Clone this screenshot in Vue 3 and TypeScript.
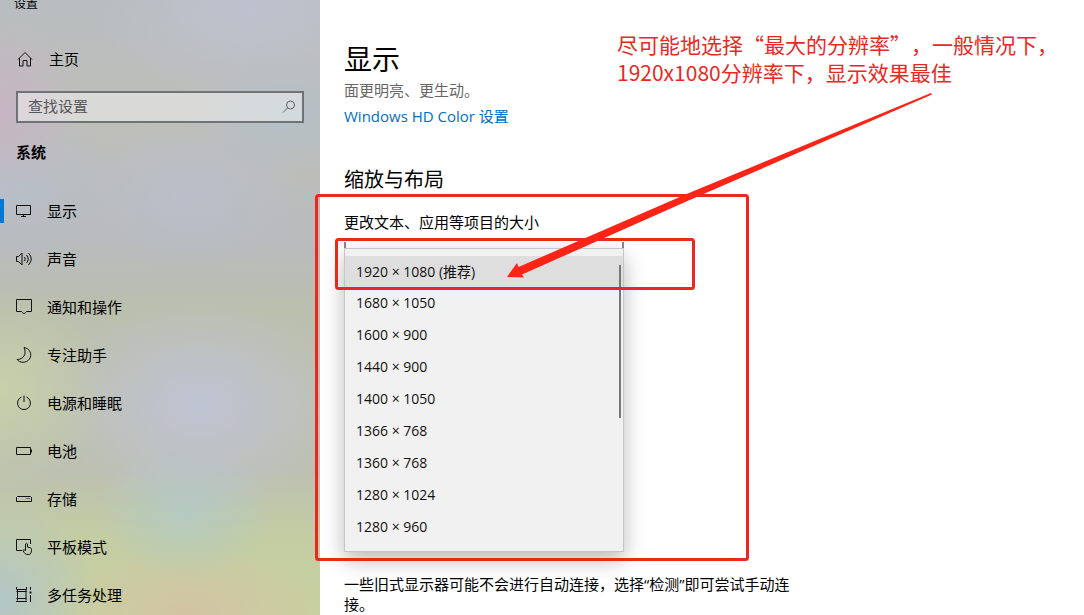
<script setup lang="ts">
import { ref } from 'vue'

interface NavItem {
  id: string
  label: string
}

const navItems: NavItem[] = [
  { id: 'display', label: '显示' },
  { id: 'sound', label: '声音' },
  { id: 'notify', label: '通知和操作' },
  { id: 'focus', label: '专注助手' },
  { id: 'power', label: '电源和睡眠' },
  { id: 'battery', label: '电池' },
  { id: 'storage', label: '存储' },
  { id: 'tablet', label: '平板模式' },
  { id: 'multitask', label: '多任务处理' },
]

const resolutions: string[] = [
  '1920 × 1080 (推荐)',
  '1680 × 1050',
  '1600 × 900',
  '1440 × 900',
  '1400 × 1050',
  '1366 × 768',
  '1360 × 768',
  '1280 × 1024',
  '1280 × 960',
]

const active = ref('display')
const resolution = ref(resolutions[0])
const query = ref('')
</script>

<template>
  <div class="window">
    <aside class="sidebar">
      <div class="title"><span>设置</span></div>
      <a class="home" href="#home">
        <svg class="icon" viewBox="0 0 18 18" aria-hidden="true">
          <path d="M2 9.5 9 2.500 16 9.500M3.500 8v8h3.500v-5.500h4V16h3.500V8" />
        </svg>
        <span>主页</span>
      </a>
      <div class="search">
        <input v-model="query" type="text" placeholder="查找设置" aria-label="查找设置" />
        <button type="button" aria-label="搜索">
          <svg viewBox="0 0 14 14" aria-hidden="true">
            <circle cx="8.500" cy="5" r="4" />
            <path d="M5.500 8 1 12.500" />
          </svg>
        </button>
      </div>
      <h2 class="group">系统</h2>
      <nav>
        <a
          v-for="item in navItems"
          :key="item.id"
          :href="'#' + item.id"
          :class="['nav-item', { active: active === item.id }]"
          @click.prevent="active = item.id"
        >
          <svg class="icon" viewBox="0 0 18 18" aria-hidden="true">
            <g v-if="item.id === 'display'">
              <path d="M.5 3.500h14v9H.5zM7.500 12.500v2M5 14.500h5" />
            </g>
            <g v-else-if="item.id === 'sound'">
              <path d="M.5 6.500h2l3.500-3.500v12L2.500 11.500h-2zM8.500 7q1.500 2 0 4M10.500 5q3.500 4 0 8M12.500 3q5.500 6 0 12" />
            </g>
            <g v-else-if="item.id === 'notify'">
              <path d="M.5 1.500h15v12h-5L8 16l-2.500-2.500h-5z" />
            </g>
            <g v-else-if="item.id === 'focus'">
              <path d="M8 1.500c6 1 8.500 7 5.500 11.500-3 4.500-10 4-12.500.500C7.500 13.500 11 8 8 1.500z" />
            </g>
            <g v-else-if="item.id === 'power'">
              <path d="M8 1.500V8M5.500 3C-.5 5.500.5 15.500 8 15.500S16.500 5.500 10.500 3" />
            </g>
            <g v-else-if="item.id === 'battery'">
              <path d="M.5 5.500h14v7H.5zM15.500 7.500v3" />
            </g>
            <g v-else-if="item.id === 'storage'">
              <path d="M1.500 6.500h13l1 1v4h-15v-4zM10.500 8.500h1M12.500 8.500h1" />
            </g>
            <g v-else-if="item.id === 'tablet'">
              <path d="M6 12.500H.5v-11h14V6M9.500 12.500V6q1-1.500 2 0V9l3 .8q1 .3 1 1.700c0 4-1 5-3.500 5S8.500 15.500 7 12.500q.5-1.500 2.500 0" />
            </g>
            <g v-else>
              <path d="M.5 1v2.500h10V1M1.500 3.500v11M10 3.500v11M.5 5.500h10M.5 12.500h10M0 15.500h11M14.500 1v3M14.500 9v7" />
              <path d="M13.500 6.500h2" class="dot" />
            </g>
          </svg>
          <span>{{ item.label }}</span>
        </a>
      </nav>
    </aside>

    <main class="content">
      <h1>显示</h1>
      <p class="muted">面更明亮、更生动。</p>
      <a class="link" href="#hd-color">Windows HD Color 设置</a>

      <h2 class="section">缩放与布局</h2>
      <label class="field-label" for="resolution">更改文本、应用等项目的大小</label>
      <div class="dropdown">
        <div class="stub"></div>
        <div class="popup">
          <select id="resolution" v-model="resolution" size="9">
            <option v-for="r in resolutions" :key="r" :value="r">{{ r }}</option>
          </select>
          <span class="thumb"></span>
        </div>
      </div>
      <p class="hint">一些旧式显示器可能不会进行自动连接，选择“检测”即可尝试手动连接。</p>
    </main>

    <svg class="marks" width="1084" height="615" aria-hidden="true">
      <rect x="316.500" y="195.500" width="431" height="364" rx="2" />
      <rect x="336.500" y="239.500" width="357" height="49" rx="2" />
      <path d="M931 93 932 94.500 692 199 522 274.500 524 277.500 507 277 517 263 518.500 267 689 193z" class="arrow" />
    </svg>
    <p class="note">尽可能地选择“最大的分辨率”，一般情况下，<br />1920x1080分辨率下，显示效果最佳</p>
  </div>
</template>

<style>
body {
  margin: 0;
}
</style>

<style scoped>
.window {
  position: relative;
  display: flex;
  height: 100vh;
  overflow: hidden;
  background: #fff;
  color: #000;
  font-family: "Open Sans", "Noto Sans CJK SC", sans-serif;
  font-size: 15px;
  line-height: 24px;
}
h1,
h2,
p {
  margin: 0;
  font-weight: 400;
}
a {
  color: inherit;
  text-decoration: none;
}
.sidebar {
  flex: none;
  width: 320px;
  background:
    radial-gradient(ellipse 80px 90px at 0 110px, rgba(200, 180, 196, 0.9), rgba(200, 180, 196, 0)),
    radial-gradient(ellipse 150px 90px at 250px 10px, rgba(191, 195, 210, 0.8), rgba(191, 195, 210, 0)),
    radial-gradient(ellipse 90px 60px at 285px 115px, rgba(176, 192, 202, 0.8), rgba(176, 192, 202, 0)),
    radial-gradient(ellipse 110px 80px at 190px 195px, rgba(184, 191, 207, 0.7), rgba(184, 191, 207, 0)),
    radial-gradient(ellipse 120px 80px at 10px 185px, rgba(181, 191, 203, 0.8), rgba(181, 191, 203, 0)),
    radial-gradient(ellipse 140px 110px at 200px 405px, rgba(190, 195, 214, 0.9), rgba(190, 195, 214, 0)),
    radial-gradient(ellipse 110px 100px at 0 390px, rgba(199, 210, 168, 0.9), rgba(199, 210, 168, 0)),
    radial-gradient(ellipse 90px 70px at 185px 510px, rgba(176, 202, 200, 0.8), rgba(176, 202, 200, 0)),
    radial-gradient(ellipse 130px 70px at 190px 615px, rgba(212, 194, 164, 0.9), rgba(212, 194, 164, 0)),
    radial-gradient(ellipse 100px 100px at 0 600px, rgba(176, 196, 204, 0.9), rgba(176, 196, 204, 0)),
    linear-gradient(#b9bdbf 0, #bebeb9 130px, #b9bbbd 240px, #bbbfae 310px, #bfc1b3 400px, #bdc0b1 470px, #c4cda2 540px, #c8d0a0 100%);
}
.title {
  display: flex;
  align-items: flex-end;
  height: 12px;
  padding-left: 14px;
  font-size: 12px;
  line-height: 16px;
}
.home {
  display: flex;
  align-items: center;
  gap: 15px;
  height: 48px;
  margin-top: 23px;
  padding-left: 16px;
}
.icon {
  flex: none;
  width: 18px;
  height: 18px;
  fill: none;
  stroke: #111;
  stroke-width: 1;
}
.icon .dot {
  stroke-width: 2;
}
.search {
  display: flex;
  align-items: center;
  box-sizing: border-box;
  height: 32px;
  margin: 8px 16px 0;
  border: 2px solid #707376;
  background: rgba(255, 255, 255, 0.42);
}
.search input {
  flex: 1;
  min-width: 0;
  height: 24px;
  padding: 0 0 2px 10px;
  border: 0;
  outline: 0;
  background: transparent;
  color: #222;
  font: inherit;
}
.search input::placeholder {
  color: #55575a;
  opacity: 1;
}
.search button {
  display: flex;
  padding: 0 6px;
  border: 0;
  background: transparent;
}
.search svg {
  width: 14px;
  height: 14px;
  fill: none;
  stroke: #5d6063;
}
.group {
  margin: 17px 16px 23px;
  font-size: 15px;
  font-weight: 700;
}
.nav-item {
  display: flex;
  align-items: center;
  gap: 13px;
  height: 48px;
  padding-left: 16px;
}
.nav-item.active {
  padding-left: 0;
}
.nav-item.active::before {
  width: 4px;
  height: 24px;
  margin-right: -1px;
  background: #0078d7;
  content: "";
}
.content {
  flex: 1;
  min-width: 0;
  padding: 41px 24px 0;
}
h1 {
  font-size: 28px;
  line-height: 36px;
}
.muted {
  margin-top: 1px;
  color: #666;
}
.link {
  display: block;
  width: fit-content;
  margin-top: 2px;
  color: #0070c6;
}
.section {
  margin-top: 38px;
  font-size: 20px;
  line-height: 28px;
}
.field-label {
  display: block;
  margin-top: 16px;
}
.dropdown {
  width: 280px;
  margin-top: 8px;
}
.stub {
  height: 6px;
  border: solid #85888b;
  border-width: 0 2px;
}
.popup {
  position: relative;
  box-sizing: border-box;
  padding: 7px 0;
  border: 1px solid #c4c6c8;
  background: #f1f1f1;
  box-shadow: 0 8px 20px rgba(0, 0, 0, 0.28);
}
.popup select {
  display: block;
  width: 100%;
  height: 288px;
  padding: 0;
  overflow: hidden;
  border: 0;
  outline: 0;
  background: transparent;
  color: #111;
  font: inherit;
  font-size: 14px;
  scrollbar-width: none;
}
.popup option {
  box-sizing: border-box;
  height: 32px;
  padding: 5px 11px 0;
  color: #111;
}
.popup option:checked {
  background: #dedede linear-gradient(#dedede, #dedede);
  color: #111;
}
.thumb {
  position: absolute;
  top: 16px;
  right: 2px;
  width: 2px;
  height: 153px;
  background: #777;
}
.hint {
  max-width: 454px;
  margin-top: 22px;
  line-height: 20px;
}
.marks {
  position: absolute;
  top: 0;
  left: 0;
  fill: none;
  stroke: #e8291f;
  stroke-width: 3;
  pointer-events: none;
}
.marks .arrow {
  fill: #fb2416;
  stroke: none;
}
.note {
  position: absolute;
  top: 30px;
  left: 617px;
  color: #e8291f;
  font-family: "Noto Sans CJK SC", sans-serif;
  font-size: 21px;
  line-height: 28px;
  text-spacing-trim: space-all;
  white-space: nowrap;
}
</style>
